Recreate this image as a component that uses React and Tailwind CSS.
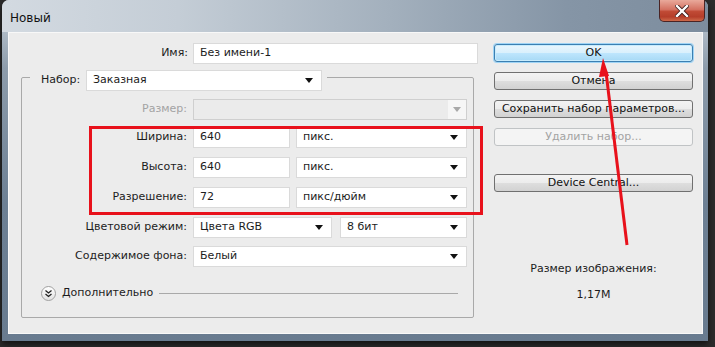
import React from "react";

// Small black triangle used by every drop-down
function Caret({ disabled }) {
  return (
    <svg width="8" height="5" viewBox="0 0 8 5" className="shrink-0">
      <path d="M0 0 H8 L4 5 Z" fill={disabled ? "#a8a8a8" : "#111"} />
    </svg>
  );
}

function Select({ value, className = "" }) {
  return (
    <div
      className={`h-[21px] bg-white border border-[#dadada] flex items-center justify-between pl-[6px] pr-[8px] ${className}`}
    >
      <span>{value}</span>
      <Caret />
    </div>
  );
}

function TextInput({ value, className = "" }) {
  return (
    <div className={`h-[21px] bg-white border border-[#dadada] flex items-center pl-[6px] ${className}`}>
      {value}
    </div>
  );
}

// Label column + field area, labels right-aligned
function Row({ label, children, className = "", disabled }) {
  return (
    <div className={`flex items-center ${className}`}>
      <span className={`w-[158px] text-right pr-[1px] ${disabled ? "text-[#a3a3a3]" : ""}`}>{label}</span>
      <div className="ml-[5px] flex-1 flex gap-[6px]">{children}</div>
    </div>
  );
}

function Button({ children, variant = "normal", className = "" }) {
  const styles = {
    normal:
      "border-[#707070] bg-[linear-gradient(to_bottom,#f3f3f3_0%,#ececec_50%,#dedede_51%,#d2d2d2_100%)] text-[#111]",
    primary:
      "border-[#3c7fb1] bg-[linear-gradient(to_bottom,#eaf6fd_0%,#d9f0fc_50%,#bee6fd_51%,#a7d9f5_100%)] text-[#111] shadow-[0_0_0_1px_#9fd4f5,inset_0_0_0_1px_#c8ecfd]",
    disabled: "border-[#c0c3c5] bg-[#f4f4f4] text-[#a3a3a3]",
  };
  return (
    <div
      className={`h-[18px] rounded-[3px] border flex items-center justify-center ${styles[variant]} ${className}`}
    >
      {children}
    </div>
  );
}

export default function App() {
  return (
    <div className="relative w-[715px] h-[347px] bg-[#2c2c2c] overflow-hidden font-['DejaVu_Sans',sans-serif] text-[11px] text-[#1c1c1c]">
      {/* ---------------- WINDOW ---------------- */}
      <div className="ml-[2px] w-[706px] h-[341px] rounded-t-[7px] flex flex-col bg-[linear-gradient(to_bottom,#c9d2db_0%,#8d9cab_20%,#6d8094_60%,#687b8f_100%)] shadow-[0_3px_6px_#111]">
        {/* Title bar */}
        <div className="h-[32px] shrink-0 flex justify-between rounded-t-[7px] bg-[linear-gradient(to_right,#d3dae1_0%,#c4cdd6_25%,#a3b0bd_55%,#8595a6_80%,#7d8d9e_100%)]">
          <span className="pl-[8px] pt-[9px] text-[12px] text-[#111]">Новый</span>
          <div className="mr-[3px] w-[46px] h-[22px] rounded-b-[5px] border border-t-0 border-[#4a2424] bg-[linear-gradient(to_bottom,#e9a99b_0%,#d47262_45%,#c04a35_55%,#b53e2a_80%,#cc6a4a_100%)] flex items-center justify-center">
            <svg width="14" height="12" viewBox="0 0 14 12">
              <path d="M2 1 L12 11 M12 1 L2 11" stroke="#3a1a1a" strokeWidth="4" strokeLinecap="square" />
              <path d="M2 1 L12 11 M12 1 L2 11" stroke="#ffffff" strokeWidth="2.4" strokeLinecap="square" />
            </svg>
          </div>
        </div>

        {/* Client area */}
        <div className="flex-1 pl-[6px] pr-[5px] pb-[7px] flex">
          <div className="flex-1 bg-[#ececec] border border-[#f8f8f8] flex">
            {/* ---------------- LEFT COLUMN ---------------- */}
            <div className="w-[472px] flex flex-col pt-[10px]">
              <div className="flex items-center h-[21px]">
                <span className="w-[179px] text-right">Имя:</span>
                <TextInput value="Без имени-1" className="ml-[5px] w-[285px]" />
              </div>

              <fieldset className="ml-[12px] w-[453px] border border-[#a9a9a9] rounded-[2px] pl-[8px] pr-[6px] pb-[16px]">
                <legend className="pt-[6px] pl-[11px] pr-[5px]">
                  <div className="flex items-center">
                    <span className="w-[45px]">Набор:</span>
                    <Select value="Заказная" className="w-[236px] h-[20px]" />
                  </div>
                </legend>

                <div className="flex flex-col">
                  <Row label="Размер:" disabled className="mt-[8px]">
                    <div className="flex-1 h-[21px] border border-[#cfcfcf] bg-[#ebebeb] flex justify-end">
                      <div className="w-[18px] bg-[#f6f6f6] flex items-center justify-center">
                        <Caret disabled />
                      </div>
                    </div>
                  </Row>
                  <Row label="Ширина:" className="mt-[7px]">
                    <TextInput value="640" className="w-[97px]" />
                    <Select value="пикс." className="flex-1" />
                  </Row>
                  <Row label="Высота:" className="mt-[9px]">
                    <TextInput value="640" className="w-[97px]" />
                    <Select value="пикс." className="flex-1" />
                  </Row>
                  <Row label="Разрешение:" className="mt-[9px]">
                    <TextInput value="72" className="w-[97px]" />
                    <Select value="пикс/дюйм" className="flex-1" />
                  </Row>
                  <Row label="Цветовой режим:" className="mt-[9px]">
                    <Select value="Цвета RGB" className="w-[139px]" />
                    <Select value="8 бит" className="flex-1 ml-[2px]" />
                  </Row>
                  <Row label="Содержимое фона:" className="mt-[8px]">
                    <Select value="Белый" className="flex-1" />
                  </Row>

                  {/* Advanced toggle */}
                  <div className="mt-[18px] h-[16px] flex items-center ml-[11px]">
                    <div className="w-[15px] h-[15px] rounded-full border border-[#a0a0a0] bg-[linear-gradient(to_bottom,#ffffff,#e2e2e2)] flex items-center justify-center">
                      <svg width="9" height="9" viewBox="0 0 9 9">
                        <path d="M1.5 1.5 L4.5 4 L7.5 1.5 M1.5 5 L4.5 7.5 L7.5 5" stroke="#222" strokeWidth="1.3" fill="none" />
                      </svg>
                    </div>
                    <span className="ml-[6px]">Дополнительно</span>
                    <div className="ml-[6px] flex-1 mr-[9px] h-px bg-[#a9a9a9]" />
                  </div>
                </div>
              </fieldset>
            </div>

            {/* ---------------- RIGHT COLUMN ---------------- */}
            <div className="ml-[13px] w-[199px] flex flex-col pt-[11px]">
              <Button variant="primary">OK</Button>
              <Button className="mt-[10px]">Отмена</Button>
              <Button className="mt-[10px]">Сохранить набор параметров...</Button>
              <Button variant="disabled" className="mt-[10px]">Удалить набор...</Button>
              <Button className="mt-[28px]">Device Central...</Button>
              <p className="mt-[69px] text-center">Размер изображения:</p>
              <p className="mt-[9px] text-center">1,17M</p>
            </div>
          </div>
        </div>
      </div>

      {/* ---------------- ANNOTATIONS (drawn over the dialog) ---------------- */}
      <div className="absolute left-[89px] top-[126px] w-[394px] h-[89px] border-[3px] border-[#e8111b]" />
      <svg className="absolute left-0 top-0" width="715" height="347" viewBox="0 0 715 347">
        <line x1="627" y1="245" x2="606" y2="72" stroke="#e8111b" strokeWidth="3" />
        <path d="M603 58 L609 76 L599 77 Z" fill="#e8111b" />
      </svg>
    </div>
  );
}
